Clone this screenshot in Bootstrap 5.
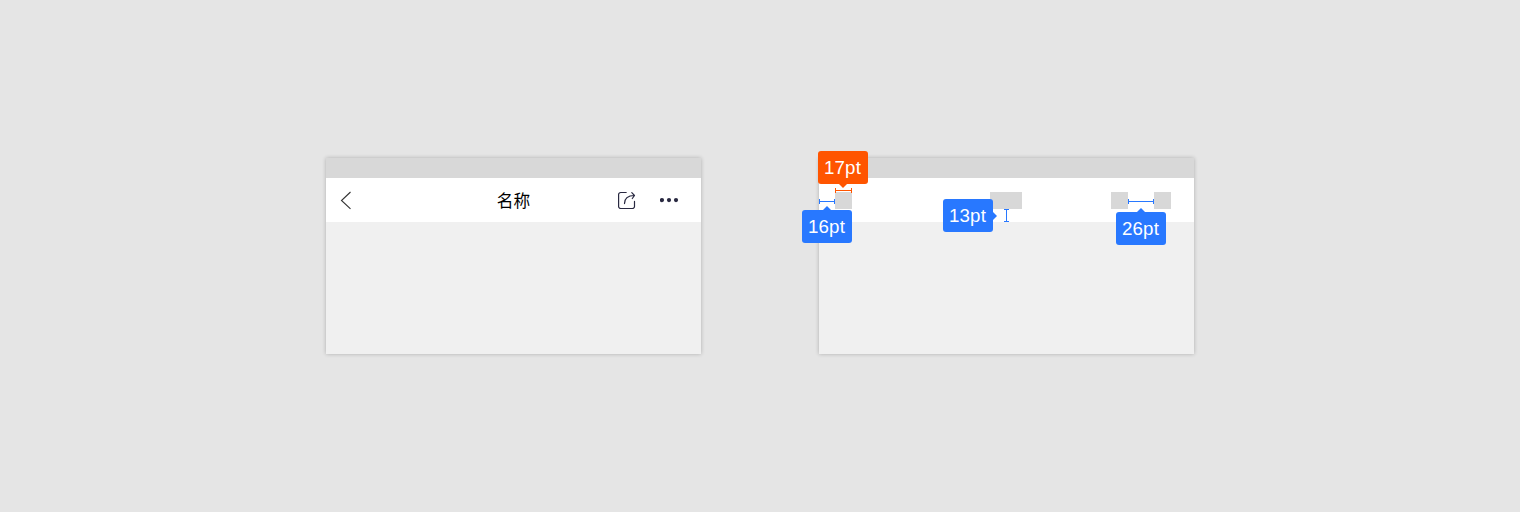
<!DOCTYPE html>
<html lang="zh-CN">
<head>
<meta charset="utf-8">
<meta name="viewport" content="width=device-width, initial-scale=1">
<title>名称</title>
<link rel="stylesheet" href="https://cdn.jsdelivr.net/npm/bootstrap@5.3.0/dist/css/bootstrap.min.css">
<style>
body{background:#e5e5e5;font-family:"Liberation Sans","Noto Sans CJK SC",sans-serif}
.stage{gap:118px}
.phone{width:375px;height:196px;background:#f0f0f0;box-shadow:0 0 4px rgba(0,0,0,.24)}
.statusbar{height:20px;background:#d8d8d8}
.appbar{height:44px;padding:0 22px 0 14px}
.appbar-title{font:400 16.700px/24px "Noto Sans CJK SC",sans-serif;color:#000;padding-left:8px}
.appbar-side{width:80px}
.more-icon{margin-left:24px}
.spec-bar{height:44px;padding:0 23px 0 16px}
.slot{width:17px;height:17px;background:#d8d8d8}
.slot-title{width:32px;margin-left:138px}
.slot-share{margin-left:89px}
.slot-more{margin-left:26px}
/* measuring lines and their labels lie over the slots */
.ruler{position:absolute;display:block;color:#2878ff}
.hot{color:#ff5500}
.tip{position:absolute;width:50px;height:33px;border-radius:3px;background:#2878ff;color:#fff;font-size:18.7px;line-height:34px;letter-spacing:.15px;padding-right:1px;text-align:center}
.tip.hot{background:#ff5500;color:#fff}
.tip::after{content:"";position:absolute;border:4px solid transparent}
.tip-up::after{left:21px;bottom:100%;border-bottom-color:#2878ff;border-top:0}
.tip-down::after{left:21px;top:100%;border-top-color:#ff5500;border-bottom:0}
.tip-right::after{left:100%;top:13px;border-left-color:#2878ff;border-right:0}
</style>
</head>
<body>
<main class="stage d-flex justify-content-center align-items-center vh-100">
  <section class="phone">
    <div class="statusbar"></div>
    <nav class="appbar bg-white d-flex align-items-center justify-content-between">
      <div class="appbar-side d-flex">
        <svg width="12" height="20" viewBox="0 0 12 20" fill="none" stroke="#333" stroke-width="1.1"><path d="M10.500 2 1.500 10.500l9 8.300"/></svg>
      </div>
      <div class="appbar-title">名称</div>
      <div class="appbar-side d-flex justify-content-end align-items-center">
        <svg class="flex-shrink-0" width="18" height="18" viewBox="0 0 18 18" fill="none" stroke="#282840" stroke-width="1.2" stroke-linecap="round" stroke-linejoin="round"><path d="M8.200 1.500H2.700A2.100 2.100 0 0 0 .6 3.600v11.800a2.100 2.100 0 0 0 2.100 2.100h11.700a2.100 2.100 0 0 0 2.100-2.100V10.400"/><path d="M6.500 12.600C6.500 8 9 4.600 16.400 4.500M13.800 1.700l2.700 2.800-2.200 3"/></svg>
        <svg class="more-icon flex-shrink-0" width="19" height="18" viewBox="0 0 19 18" fill="#282840"><circle cx="2" cy="9.100" r="2.100"/><circle cx="9" cy="9.100" r="2.100"/><circle cx="16" cy="9.100" r="2.100"/></svg>
      </div>
    </nav>
  </section>
  <section class="phone position-relative">
    <div class="statusbar"></div>
    <div class="spec-bar bg-white d-flex align-items-center">
      <div class="slot"></div>
      <div class="slot slot-title"></div>
      <div class="slot slot-share"></div>
      <div class="slot slot-more"></div>
    </div>
    <svg class="ruler hot" style="left:16px;top:30px" width="17" height="5" fill="none" stroke="currentColor"><path d="M.5 0v5M16.500 0v5M0 2.500h17"/></svg>
    <svg class="ruler" style="left:0;top:41px" width="16" height="5" fill="none" stroke="currentColor"><path d="M.5 0v5M15.500 0v5M0 2.500h16"/></svg>
    <svg class="ruler" style="left:185px;top:51px" width="5" height="13" fill="none" stroke="currentColor"><path d="M0 .5h5M0 12.500h5M2.500 0v13"/></svg>
    <svg class="ruler" style="left:309px;top:41px" width="26" height="5" fill="none" stroke="currentColor"><path d="M.5 0v5M25.500 0v5M0 2.500h26"/></svg>
    <div class="tip tip-down hot" style="left:-1px;top:-7px">17pt</div>
    <div class="tip tip-up" style="left:-17px;top:52px">16pt</div>
    <div class="tip tip-right" style="left:124px;top:41px">13pt</div>
    <div class="tip tip-up" style="left:297px;top:54px">26pt</div>
  </section>
</main>
<script src="https://cdn.jsdelivr.net/npm/bootstrap@5.3.0/dist/js/bootstrap.bundle.min.js"></script>
</body>
</html>
